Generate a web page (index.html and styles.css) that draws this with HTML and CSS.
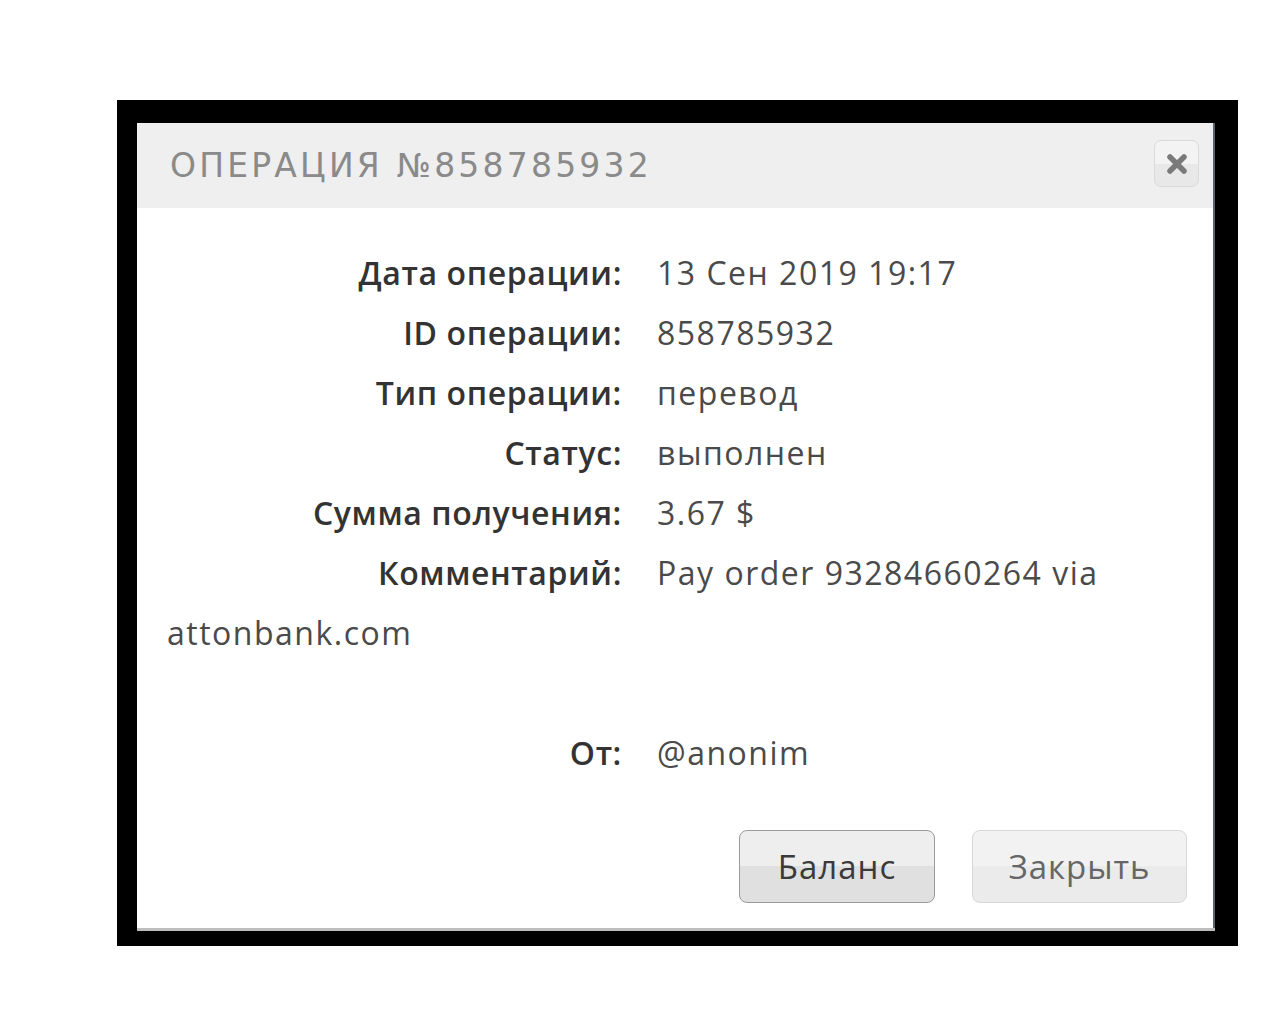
FILE: index.html
```html
<!DOCTYPE html>
<html lang="ru">
  <head>
    <meta charset="UTF-8" />
    <meta name="viewport" content="width=device-width, initial-scale=1.0" />
    <title>Операция №858785932</title>
    <link rel="stylesheet" href="styles.css">
  </head>
  <body>
    <div class="frame">
      <div class="dialog">
        <div class="dialog-header">
          <h1>Операция №858785932</h1>
          <button type="button" class="close-btn" aria-label="Закрыть">
            <svg width="22" height="22" viewBox="0 0 22 22">
              <path d="M4 4 L18 18 M18 4 L4 18" stroke="#7a7a7a" stroke-width="5.5" stroke-linecap="round" />
            </svg>
          </button>
        </div>

        <div class="dialog-body">
          <div class="row"><span class="label">Дата операции:</span><span class="value">13 Сен 2019 19:17</span></div>
          <div class="row"><span class="label">ID операции:</span><span class="value">858785932</span></div>
          <div class="row"><span class="label">Тип операции:</span><span class="value">перевод</span></div>
          <div class="row"><span class="label">Статус:</span><span class="value">выполнен</span></div>
          <div class="row"><span class="label">Сумма получения:</span><span class="value">3.67 $</span></div>
          <div class="row comment"><span class="label">Комментарий:</span><span class="value">Pay order 93284660264 via attonbank.com</span></div>
          <div class="row"><span class="label">От:</span><span class="value">@anonim</span></div>
        </div>

        <div class="dialog-footer">
          <button type="button" class="btn btn-primary">Баланс</button>
          <button type="button" class="btn btn-close">Закрыть</button>
        </div>
      </div>
    </div>
  </body>
</html>
```

FILE: styles.css
```css
body {
  margin: 0;
  background-color: #fff;
  font-family: "Open Sans", Arial, sans-serif;
}
.frame {
  width: 1121px;
  height: 846px;
  margin: 100px 0 0 117px;
  padding: 23px 23px 18px 20px;
  box-sizing: border-box;
  background-color: #000;
}
.dialog {
  width: 1078px;
  height: 805px;
  background-color: #fff;
  border-right: 2px solid #5a6470;
  box-sizing: border-box;
  box-shadow: 0 3px 0 #bdbdbd;
}
.dialog-header {
  height: 85px;
  background-color: #efefef;
  display: flex;
  align-items: center;
  justify-content: space-between;
  padding: 0 14px 0 33px;
}
.dialog-header h1 {
  margin: 0;
  font-family: "DejaVu Sans", sans-serif;
  font-weight: normal;
  font-size: 33px;
  letter-spacing: 3.2px;
  text-transform: uppercase;
  color: #8a8a8a;
}
.close-btn {
  width: 45px;
  height: 47px;
  margin-top: -4px;
  padding: 0;
  display: flex;
  align-items: center;
  justify-content: center;
  border: 1px solid #dadada;
  border-radius: 7px;
  background: linear-gradient(#f3f3f3, #f3f3f3 50%, #e8e8e8 50%, #e8e8e8);
  cursor: pointer;
}
.dialog-body {
  padding: 35px 60px 0 30px;
  font-size: 32px;
  line-height: 60px;
}
.row {
  color: #4a4a4a;
}
.label {
  display: inline-block;
  width: 455px;
  margin-right: 35px;
  text-align: right;
  font-weight: 600;
  color: #333;
  letter-spacing: 0.6px;
}
.value {
  letter-spacing: 1.5px;
}
.comment {
  margin-bottom: 60px;
}
.dialog-footer {
  display: flex;
  justify-content: flex-end;
  gap: 37px;
  padding: 47px 26px 0 0;
}
.btn {
  height: 73px;
  padding: 0;
  font-family: "Open Sans", Arial, sans-serif;
  font-size: 33px;
  letter-spacing: 1px;
  color: #666;
  border: 1px solid #d8d8d8;
  border-radius: 8px;
  background: linear-gradient(#f2f2f2, #f2f2f2 50%, #ebebeb 50%, #ebebeb);
  cursor: pointer;
}
.btn-primary {
  width: 196px;
  color: #3a3a3a;
  border-color: #9a9a9a;
  background: linear-gradient(#eeeeee, #eeeeee 50%, #e0e0e0 50%, #e0e0e0);
}
.btn-close {
  width: 215px;
}
```
